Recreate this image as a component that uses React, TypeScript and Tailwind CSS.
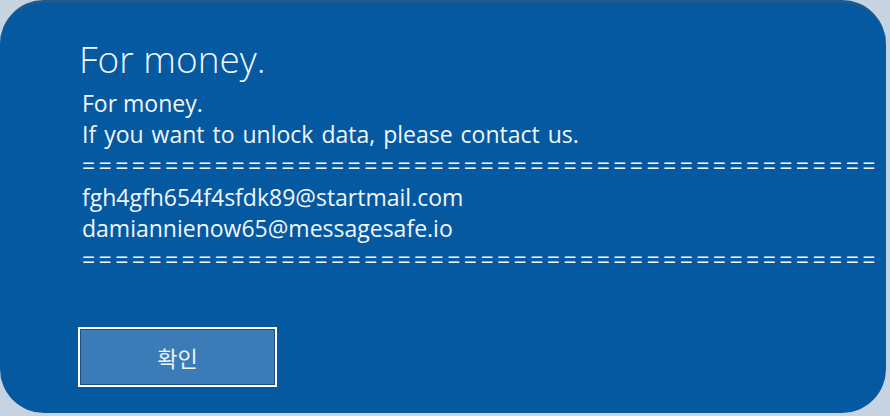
import React from 'react';

const ruler = '='.repeat(48);

const App = () => {
  return (
    <div className="h-[416px] w-[890px] overflow-hidden bg-[#c6d4e2]">
      <div
        className="flex h-[413px] w-[886px] flex-col overflow-hidden rounded-[44px] border-t-[3px] border-[#1f5a8c] bg-[#0559a0] text-[#f1f6fb]"
        style={{ fontFamily: '"Open Sans", "Noto Sans", "Noto Sans CJK KR", sans-serif' }}
      >
        {/* 제목 */}
        <h1 className="ml-[79px] mt-[36px] text-[37px] font-light leading-[40px]">For money.</h1>

        {/* 본문 */}
        <div className="ml-[82px] mt-[9px] text-[23px] leading-[31.2px]">
          <p>For money.</p>
          <p className="[word-spacing:2px]">If you want to unlock data, please contact us.</p>
          <p className="whitespace-nowrap tracking-[3.45px]">{ruler}</p>
          <p>fgh4gfh654f4sfdk89@startmail.com</p>
          <p>damiannienow65@messagesafe.io</p>
          <p className="whitespace-nowrap tracking-[3.45px]">{ruler}</p>
        </div>

        {/* 확인 버튼 */}
        <button
          className="ml-[78px] mt-[52px] h-[60px] w-[199px] border-2 border-white bg-[#1c4f80] p-px"
          tabIndex={0}
        >
          <span
            className="flex h-full w-full items-center justify-center bg-[#3b7cb8] text-[22px] text-[#eef4fa]"
            style={{ fontFamily: '"Noto Sans CJK KR", sans-serif' }}
          >
            확인
          </span>
        </button>
      </div>
    </div>
  );
};

export default App;
